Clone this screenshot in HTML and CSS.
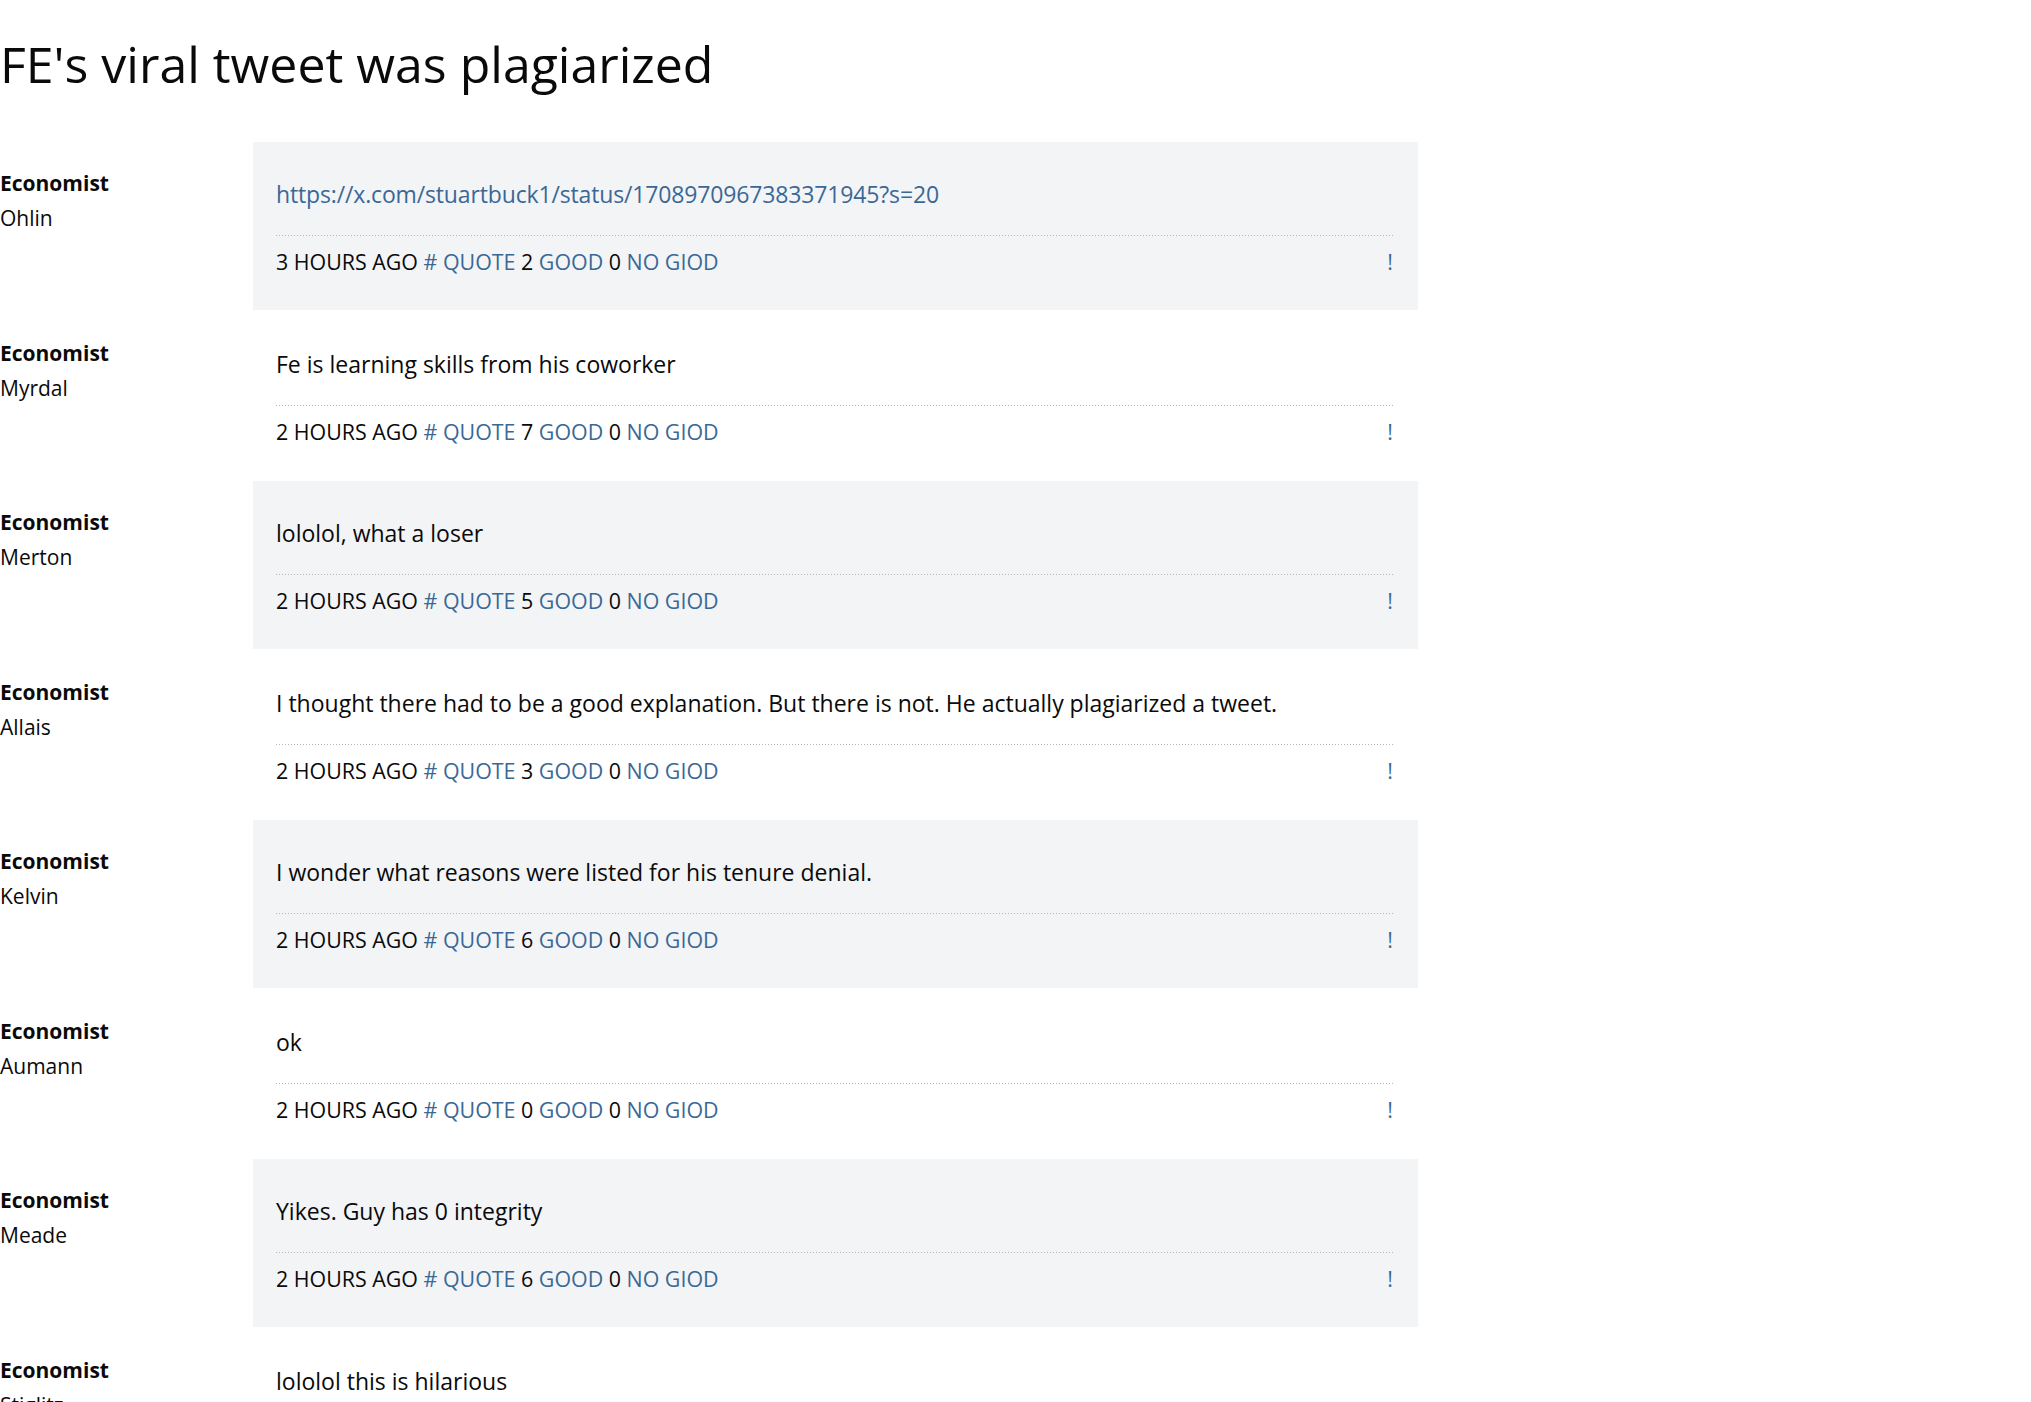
FILE: index.html
```html
<!DOCTYPE html>
<html>
<head>
<meta charset="utf-8">
<title>FE's viral tweet was plagiarized</title>
<link rel="stylesheet" href="styles.css">
</head>
<body>
<h1 class="title">FE's viral tweet was plagiarized</h1>
<div class="thread">

  <div class="row">
    <div class="author"><div class="author-role">Economist</div><div class="author-name">Ohlin</div></div>
    <div class="post post-shaded">
      <p class="post-text"><a class="link" href="#">https://x.com/stuartbuck1/status/1708970967383371945?s=20</a></p>
      <div class="meta">
        <div class="meta-left"><span class="time">3 HOURS AGO</span> <a class="act" href="#"># QUOTE</a> <span class="count">2</span> <a class="act" href="#">GOOD</a> <span class="count">0</span> <a class="act" href="#">NO GIOD</a></div>
        <a class="act report" href="#">!</a>
      </div>
    </div>
  </div>

  <div class="row">
    <div class="author"><div class="author-role">Economist</div><div class="author-name">Myrdal</div></div>
    <div class="post">
      <p class="post-text">Fe is learning skills from his coworker</p>
      <div class="meta">
        <div class="meta-left"><span class="time">2 HOURS AGO</span> <a class="act" href="#"># QUOTE</a> <span class="count">7</span> <a class="act" href="#">GOOD</a> <span class="count">0</span> <a class="act" href="#">NO GIOD</a></div>
        <a class="act report" href="#">!</a>
      </div>
    </div>
  </div>

  <div class="row">
    <div class="author"><div class="author-role">Economist</div><div class="author-name">Merton</div></div>
    <div class="post post-shaded">
      <p class="post-text">lololol, what a loser</p>
      <div class="meta">
        <div class="meta-left"><span class="time">2 HOURS AGO</span> <a class="act" href="#"># QUOTE</a> <span class="count">5</span> <a class="act" href="#">GOOD</a> <span class="count">0</span> <a class="act" href="#">NO GIOD</a></div>
        <a class="act report" href="#">!</a>
      </div>
    </div>
  </div>

  <div class="row">
    <div class="author"><div class="author-role">Economist</div><div class="author-name">Allais</div></div>
    <div class="post">
      <p class="post-text">I thought there had to be a good explanation. But there is not. He actually plagiarized a tweet.</p>
      <div class="meta">
        <div class="meta-left"><span class="time">2 HOURS AGO</span> <a class="act" href="#"># QUOTE</a> <span class="count">3</span> <a class="act" href="#">GOOD</a> <span class="count">0</span> <a class="act" href="#">NO GIOD</a></div>
        <a class="act report" href="#">!</a>
      </div>
    </div>
  </div>

  <div class="row">
    <div class="author"><div class="author-role">Economist</div><div class="author-name">Kelvin</div></div>
    <div class="post post-shaded">
      <p class="post-text">I wonder what reasons were listed for his tenure denial.</p>
      <div class="meta">
        <div class="meta-left"><span class="time">2 HOURS AGO</span> <a class="act" href="#"># QUOTE</a> <span class="count">6</span> <a class="act" href="#">GOOD</a> <span class="count">0</span> <a class="act" href="#">NO GIOD</a></div>
        <a class="act report" href="#">!</a>
      </div>
    </div>
  </div>

  <div class="row">
    <div class="author"><div class="author-role">Economist</div><div class="author-name">Aumann</div></div>
    <div class="post">
      <p class="post-text">ok</p>
      <div class="meta">
        <div class="meta-left"><span class="time">2 HOURS AGO</span> <a class="act" href="#"># QUOTE</a> <span class="count">0</span> <a class="act" href="#">GOOD</a> <span class="count">0</span> <a class="act" href="#">NO GIOD</a></div>
        <a class="act report" href="#">!</a>
      </div>
    </div>
  </div>

  <div class="row">
    <div class="author"><div class="author-role">Economist</div><div class="author-name">Meade</div></div>
    <div class="post post-shaded">
      <p class="post-text">Yikes. Guy has 0 integrity</p>
      <div class="meta">
        <div class="meta-left"><span class="time">2 HOURS AGO</span> <a class="act" href="#"># QUOTE</a> <span class="count">6</span> <a class="act" href="#">GOOD</a> <span class="count">0</span> <a class="act" href="#">NO GIOD</a></div>
        <a class="act report" href="#">!</a>
      </div>
    </div>
  </div>

  <div class="row">
    <div class="author"><div class="author-role">Economist</div><div class="author-name">Stiglitz</div></div>
    <div class="post">
      <p class="post-text">lololol this is hilarious</p>
      <div class="meta">
        <div class="meta-left"><span class="time">2 HOURS AGO</span> <a class="act" href="#"># QUOTE</a> <span class="count">4</span> <a class="act" href="#">GOOD</a> <span class="count">0</span> <a class="act" href="#">NO GIOD</a></div>
        <a class="act report" href="#">!</a>
      </div>
    </div>
  </div>

</div>
</body>
</html>
```
FILE: styles.css
```css
html, body {
  margin: 0;
  padding: 0;
  background: #ffffff;
}

body {
  font-family: "Open Sans", "Noto Sans", sans-serif;
  color: #0a0a0a;
}

.title {
  font-size: 50px;
  font-weight: 400;
  line-height: 68px;
  margin: 30px 0 44px 0;
  padding: 0;
  color: #0a0a0a;
}

.thread {
  width: 1418px;
}

.row {
  display: grid;
  grid-template-columns: 253px 1165px;
  margin-bottom: 2px;
}

.author {
  padding-top: 24px;
  font-size: 21px;
  line-height: 35px;
}

.author-role {
  font-weight: 700;
}

.post {
  padding: 35px 23px 31.5px 23px;
}

.post-shaded {
  background: #f3f4f6;
}

.post-text {
  margin: 0;
  font-size: 23px;
  line-height: 34px;
}

.link {
  color: #3a6896;
  text-decoration: none;
  letter-spacing: -0.15px;
}

.meta {
  margin-top: 24px;
  padding-top: 11px;
  background-image: linear-gradient(to right, #b4b6b9 50%, rgba(0, 0, 0, 0) 50%);
  background-size: 3px 1px;
  background-repeat: repeat-x;
  background-position: left top;
  font-size: 21.4px;
  line-height: 32px;
  display: flex;
  justify-content: space-between;
}

.act {
  color: #3a6896;
  text-decoration: none;
}

.report {
  padding-right: 2px;
}
```
